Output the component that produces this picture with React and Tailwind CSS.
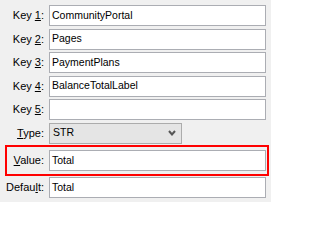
import React from 'react'

// Label with one underlined access key letter
const Label = ({ before, hot, after, width = 'w-[45px]' }) => (
  <span className={`${width} shrink-0 pr-[1px] text-right text-[11px] text-black`}>
    {before}
    <span className="underline underline-offset-[1px]">{hot}</span>
    {after}
  </span>
)

const Field = ({ value }) => (
  <div className="ml-[4px] flex h-[21px] w-[217px] items-center border border-[#abadb3] bg-white px-[2px] text-[10.5px] text-black">
    {value}
  </div>
)

const rows = [
  { before: 'Key ', hot: '1', after: ':', value: 'CommunityPortal' },
  { before: 'Key ', hot: '2', after: ':', value: 'Pages' },
  { before: 'Key ', hot: '3', after: ':', value: 'PaymentPlans' },
  { before: 'Key ', hot: '4', after: ':', value: 'BalanceTotalLabel' },
  { before: 'Key ', hot: '5', after: ':', value: '' },
]

export default function App() {
  return (
    <div
      className="h-[202px] w-[271px] overflow-hidden bg-[#f0f0f0] pt-[5px]"
      style={{ fontFamily: '"Liberation Sans", Arial, sans-serif' }}
    >
      <div className="flex flex-col gap-[2.5px]">
        {rows.map((r) => (
          <div key={r.hot} className="flex items-center">
            <Label before={r.before} hot={r.hot} after={r.after} />
            <Field value={r.value} />
          </div>
        ))}

        {/* Type select */}
        <div className="flex items-center">
          <Label before="" hot="T" after="ype:" />
          <div className="ml-[4px] flex h-[21px] w-[133px] items-center justify-between border border-[#acacac] bg-[#e5e5e5] pl-[3px] pr-[5px] text-[10.5px] text-black">
            <span>STR</span>
            <svg width="8" height="6" viewBox="0 0 8 6">
              <polyline
                points="1,1 4,4.5 7,1"
                fill="none"
                stroke="#555555"
                strokeWidth="2"
              />
            </svg>
          </div>
        </div>
      </div>

      {/* Highlighted value row */}
      <div className="ml-[5px] mt-[1.5px] flex w-[264px] items-center border-2 border-[#ff0000] pb-[3px] pt-[3px]">
        <Label before="" hot="V" after="alue:" width="w-[38px]" />
        <Field value="Total" />
      </div>

      <div className="mt-[1px] flex items-center">
        <Label before="Defau" hot="l" after="t:" />
        <Field value="Total" />
      </div>
    </div>
  )
}
